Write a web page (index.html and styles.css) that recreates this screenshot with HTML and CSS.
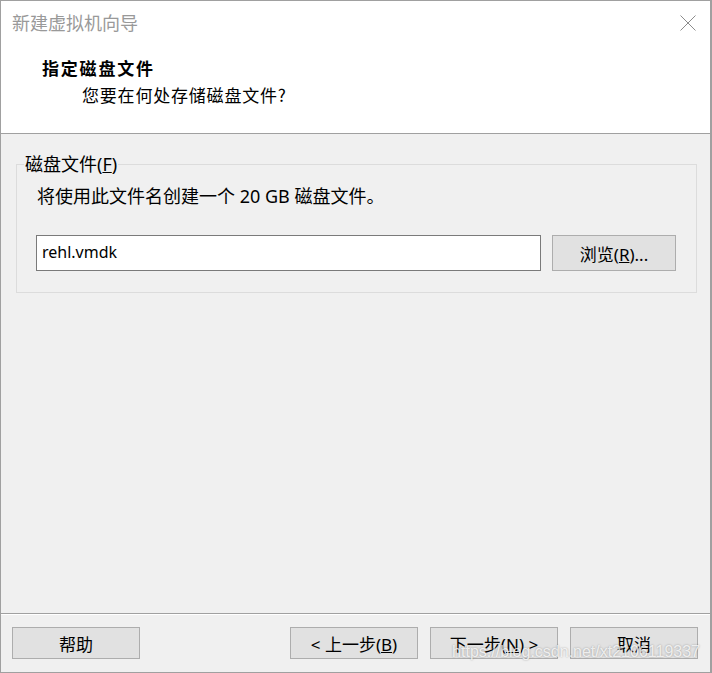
FILE: index.html
```html
<!DOCTYPE html>
<html lang="zh-CN">
<head>
<meta charset="utf-8">
<title>新建虚拟机向导</title>
<link rel="stylesheet" href="styles.css">
</head>
<body>
<div class="dialog">
  <div class="header">
    <div class="titlebar">
      <span class="title">新建虚拟机向导</span>
      <svg class="close" width="16" height="16" viewBox="0 0 16 16" aria-hidden="true">
        <path d="M0.5 0.5 L15.5 15.5 M15.5 0.5 L0.5 15.5" stroke="#8c8c8c" stroke-width="1" fill="none"/>
      </svg>
    </div>
    <div class="heading">指定磁盘文件</div>
    <div class="subheading">您要在何处存储磁盘文件?</div>
  </div>
  <div class="content">
    <fieldset class="group">
      <legend>磁盘文件(<u>F</u>)</legend>
      <p class="desc">将使用此文件名创建一个 20 GB 磁盘文件。</p>
      <div class="file-row">
        <div class="input">rehl.vmdk</div>
        <button class="btn browse">浏览(<u>R</u>)...</button>
      </div>
    </fieldset>
  </div>
  <div class="footer">
    <button class="btn">帮助</button>
    <div class="nav">
      <button class="btn">&lt; 上一步(<u>B</u>)</button>
      <button class="btn">下一步(<u>N</u>) &gt;</button>
      <button class="btn">取消</button>
    </div>
    <div class="watermark">https://blog.csdn.net/xt2106119337</div>
  </div>
</div>
</body>
</html>
```

FILE: styles.css
```css
html, body {
  margin: 0;
  padding: 0;
  background: #f0f0f0;
}

.dialog {
  position: relative;
  box-sizing: border-box;
  width: 712px;
  height: 673px;
  display: flex;
  flex-direction: column;
  border: 1px solid #a0a0a0;
  border-right-width: 2px;
  background: #f0f0f0;
  font-family: "Noto Sans", "Noto Sans CJK SC", sans-serif;
  color: #000;
}

.header {
  box-sizing: border-box;
  height: 133px;
  background: #fff;
  border-bottom: 1px solid #a0a0a0;
}

.titlebar {
  display: flex;
  justify-content: space-between;
  align-items: center;
  padding: 10px 14px 0 11px;
}

.title {
  font-size: 18px;
  line-height: 24px;
  color: #999;
}

.close {
  display: block;
}

.heading {
  margin-top: 22px;
  padding-left: 41px;
  font-family: "Noto Sans CJK SC", sans-serif;
  font-size: 17px;
  font-weight: bold;
  line-height: 22px;
  letter-spacing: 1.8px;
}

.subheading {
  margin-top: 5px;
  padding-left: 81px;
  font-family: "Noto Sans CJK SC", sans-serif;
  font-size: 17px;
  line-height: 22px;
  letter-spacing: 0.8px;
}

.content {
  flex: 1;
  padding: 20px 13px 0 15px;
}

.group {
  margin: 0;
  border: 1px solid #dcdcdc;
  padding: 0 20px 21px 19px;
}

.group legend {
  margin-left: -12px;
  padding: 0 1px;
  font-size: 18px;
  line-height: 20px;
}

.desc {
  margin: 12px 0 0 1px;
  font-size: 18px;
  line-height: 20px;
}

.file-row {
  display: flex;
  gap: 11px;
  margin-top: 29px;
}

.input {
  box-sizing: border-box;
  width: 505px;
  height: 36px;
  border: 1px solid #7a7a7a;
  background: #fff;
  padding: 0 5px;
  font-size: 16px;
  line-height: 32px;
}

.btn {
  box-sizing: border-box;
  width: 128px;
  height: 32px;
  margin: 0;
  padding: 0;
  border: 1px solid #adadad;
  background: #e1e1e1;
  font-family: "Noto Sans", "Noto Sans CJK SC", sans-serif;
  font-size: 17px;
  color: #000;
}

.btn.browse {
  width: 124px;
  height: 36px;
}

.footer {
  box-sizing: border-box;
  height: 59px;
  display: flex;
  justify-content: space-between;
  align-items: flex-start;
  padding: 13px 12px 0 11px;
  border-top: 1px solid #a0a0a0;
  box-shadow: inset 0 1px 0 #fff;
}

.nav {
  display: flex;
  gap: 12px;
}

.watermark {
  position: absolute;
  right: 10px;
  bottom: 10px;
  font-family: "Liberation Sans", sans-serif;
  font-size: 16px;
  line-height: 20px;
  color: rgba(255, 255, 255, 0.8);
  text-shadow: 0 0 2px rgba(0, 0, 0, 0.35);
  pointer-events: none;
}
```
